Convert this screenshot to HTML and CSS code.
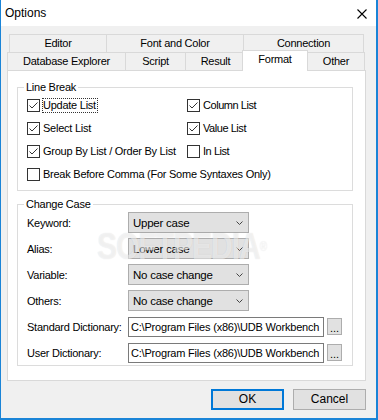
FILE: index.html
```html
<!DOCTYPE html>
<html>
<head>
<meta charset="utf-8">
<link rel="stylesheet" href="styles.css">
</head>
<body>
<div class="window">
  <div class="titlebar">
    <span class="title">Options</span>
    <svg class="close" width="10" height="10" viewBox="0 0 10 10"><path d="M0.5 0.5 L9.5 9.5 M9.5 0.5 L0.5 9.5" stroke="#000" stroke-width="1.1" fill="none"/></svg>
  </div>
  <div class="content">
    <div class="tabrow row1">
      <div class="tab t-editor">Editor</div>
      <div class="tab t-font">Font and Color</div>
      <div class="tab t-conn">Connection</div>
    </div>
    <div class="tabrow row2">
      <div class="tab t-db">Database Explorer</div>
      <div class="tab t-script">Script</div>
      <div class="tab t-result">Result</div>
      <div class="tab t-format">Format</div>
      <div class="tab t-other">Other</div>
    </div>
    <div class="panel">
      <div class="group group-lb">
        <div class="group-title">Line Break</div>
        <div class="checks">
          <div class="check"><svg class="box" width="13" height="13" viewBox="0 0 13 13"><rect x="0.5" y="0.5" width="12" height="12" fill="#fff" stroke="#333"/><polyline points="2.5,6.5 5,9 10.5,3.5" fill="none" stroke="#333" stroke-width="1"/></svg><span class="lbl focus">Update List</span></div>
          <div class="check right"><svg class="box" width="13" height="13" viewBox="0 0 13 13"><rect x="0.5" y="0.5" width="12" height="12" fill="#fff" stroke="#333"/><polyline points="2.5,6.5 5,9 10.5,3.5" fill="none" stroke="#333" stroke-width="1"/></svg><span class="lbl">Column List</span></div>
          <div class="check"><svg class="box" width="13" height="13" viewBox="0 0 13 13"><rect x="0.5" y="0.5" width="12" height="12" fill="#fff" stroke="#333"/><polyline points="2.5,6.5 5,9 10.5,3.5" fill="none" stroke="#333" stroke-width="1"/></svg><span class="lbl">Select List</span></div>
          <div class="check right"><svg class="box" width="13" height="13" viewBox="0 0 13 13"><rect x="0.5" y="0.5" width="12" height="12" fill="#fff" stroke="#333"/><polyline points="2.5,6.5 5,9 10.5,3.5" fill="none" stroke="#333" stroke-width="1"/></svg><span class="lbl">Value List</span></div>
          <div class="check"><svg class="box" width="13" height="13" viewBox="0 0 13 13"><rect x="0.5" y="0.5" width="12" height="12" fill="#fff" stroke="#333"/><polyline points="2.5,6.5 5,9 10.5,3.5" fill="none" stroke="#333" stroke-width="1"/></svg><span class="lbl">Group By List / Order By List</span></div>
          <div class="check right"><svg class="box" width="13" height="13" viewBox="0 0 13 13"><rect x="0.5" y="0.5" width="12" height="12" fill="#fff" stroke="#333"/></svg><span class="lbl">In List</span></div>
          <div class="check wide"><svg class="box" width="13" height="13" viewBox="0 0 13 13"><rect x="0.5" y="0.5" width="12" height="12" fill="#fff" stroke="#333"/></svg><span class="lbl">Break Before Comma (For Some Syntaxes Only)</span></div>
        </div>
      </div>
      <div class="group group-cc">
        <div class="group-title">Change Case</div>
        <div class="rows">
          <div class="row"><span class="rlabel">Keyword:</span><div class="combo"><span>Upper case</span><svg width="7" height="4" viewBox="0 0 7 4"><polyline points="0.5,0.5 3.5,3.5 6.5,0.5" fill="none" stroke="#444" stroke-width="1"/></svg></div></div>
          <div class="row"><span class="rlabel">Alias:</span><div class="combo"><span>Lower case</span><svg width="7" height="4" viewBox="0 0 7 4"><polyline points="0.5,0.5 3.5,3.5 6.5,0.5" fill="none" stroke="#444" stroke-width="1"/></svg></div></div>
          <div class="row"><span class="rlabel">Variable:</span><div class="combo"><span>No case change</span><svg width="7" height="4" viewBox="0 0 7 4"><polyline points="0.5,0.5 3.5,3.5 6.5,0.5" fill="none" stroke="#444" stroke-width="1"/></svg></div></div>
          <div class="row"><span class="rlabel">Others:</span><div class="combo"><span>No case change</span><svg width="7" height="4" viewBox="0 0 7 4"><polyline points="0.5,0.5 3.5,3.5 6.5,0.5" fill="none" stroke="#444" stroke-width="1"/></svg></div></div>
          <div class="row"><span class="rlabel">Standard Dictionary:</span><div class="field">C:\Program Files (x86)\UDB Workbench</div><div class="dots">...</div></div>
          <div class="row"><span class="rlabel">User Dictionary:</span><div class="field">C:\Program Files (x86)\UDB Workbench</div><div class="dots">...</div></div>
        </div>
      </div>
      <div class="watermark">SOFTPEDIA<sup>®</sup></div>
    </div>
    <div class="buttons">
      <div class="btn ok">OK</div>
      <div class="btn">Cancel</div>
    </div>
  </div>
</div>
</body>
</html>
```

FILE: styles.css
```css
* { box-sizing: border-box; }
html, body { margin: 0; padding: 0; }
body {
  font-family: "Liberation Sans", Arial, sans-serif;
  font-size: 11px;
  letter-spacing: -0.25px;
  color: #000;
  background: #f0f0f0;
}
.window {
  width: 378px;
  height: 420px;
  background: #f0f0f0;
  border-left: 1px solid #1a84d7;
  border-right: 2px solid #1a84d7;
  border-bottom: 2px solid #1a84d7;
  overflow: hidden;
}
.titlebar {
  height: 26px;
  background: #fff;
  display: flex;
  align-items: center;
  justify-content: space-between;
  padding-left: 4px;
  padding-right: 9px;
}
.title {
  font-size: 12px;
  letter-spacing: 0;
}
.close { margin-top: 2px; }
.content { padding-top: 8px; }
.tabrow {
  display: flex;
  height: 18px;
}
.row1 { margin-left: 8px; }
.row2 { margin-left: 6px; }
.tab {
  height: 18px;
  border-top: 1px solid #d9d9d9;
  border-left: 1px solid #d9d9d9;
  background: #f0f0f0;
  text-align: center;
  line-height: 17px;
}
.t-editor { width: 97px; }
.t-font { width: 137px; }
.t-conn { width: 121px; border-right: 1px solid #d9d9d9; }
.t-db { width: 118px; }
.t-script { width: 60px; }
.t-result { width: 60px; }
.t-format {
  width: 66px;
  height: 21px;
  margin-left: -3px;
  margin-top: -2px;
  border-right: 1px solid #d9d9d9;
  background: #fff;
  position: relative;
  z-index: 2;
  line-height: 17px;
}
.t-other { width: 57px; border-left: none; border-right: 1px solid #d9d9d9; }
.panel {
  position: relative;
  margin-left: 6px;
  width: 359px;
  height: 311px;
  border: 1px solid #d9d9d9;
  background: #fff;
  padding-top: 16px;
}
.group {
  margin-left: 9px;
  width: 336px;
  border: 1px solid #dcdcdc;
}
.group-title {
  width: max-content;
  margin-top: -8px;
  margin-left: 6px;
  padding: 0 2px;
  line-height: 14px;
  height: 14px;
  background: #fff;
}
.group-lb { padding-bottom: 4px; }
.checks {
  display: grid;
  grid-template-columns: 160px 1fr;
  grid-auto-rows: 23px;
  padding-left: 9px;
}
.check {
  display: flex;
  align-items: center;
}
.check.wide { grid-column: 1 / 3; }
.check.right .lbl { letter-spacing: -0.45px; }
.box { flex: none; margin-right: 3px; }
.lbl {
  line-height: 13px;
  border: 1px solid transparent;
  margin-left: -1px;
  padding: 0 1px 0 0;
}
.lbl.focus { border: 1px dotted #333; }
.group-cc {
  margin-top: 13px;
  padding-bottom: 2px;
}
.rows {
  display: flex;
  flex-direction: column;
  gap: 5px;
  margin-top: 1px;
  padding-left: 9px;
}
.row {
  display: flex;
  align-items: center;
  height: 21px;
}
.rlabel {
  width: 101px;
  flex: none;
}
.combo {
  width: 121px;
  height: 21px;
  background: #e1e1e1;
  border: 1px solid #adadad;
  display: flex;
  align-items: center;
  justify-content: space-between;
  padding: 0 5px 0 4px;
  font-size: 11.5px;
}
.field {
  width: 196px;
  height: 20px;
  border: 1px solid #7a7a7a;
  background: #fff;
  padding-left: 2px;
  line-height: 18px;
  white-space: nowrap;
  overflow: hidden;
  font-size: 11px;
  letter-spacing: -0.2px;
}
.dots {
  width: 15px;
  height: 17px;
  margin-left: 3px;
  background: #e1e1e1;
  border: 1px solid #adadad;
  text-align: center;
  line-height: 18px;
  letter-spacing: 0;
}
.watermark {
  position: absolute;
  left: 89px;
  top: 158px;
  font-size: 30px;
  font-weight: bold;
  letter-spacing: -1px;
  line-height: 30px;
  color: rgba(255, 255, 255, 0.55);
  text-shadow: 0 0 1px rgba(0, 0, 0, 0.12);
  transform: scaleY(1.2);
  transform-origin: top left;
  pointer-events: none;
}
.watermark sup { font-size: 10px; font-weight: normal; vertical-align: top; }
.buttons {
  display: flex;
  justify-content: flex-end;
  gap: 9px;
  margin-top: 8px;
  padding-right: 10px;
}
.btn {
  width: 73px;
  height: 21px;
  background: #e1e1e1;
  border: 1px solid #adadad;
  text-align: center;
  line-height: 19px;
  font-size: 12px;
  letter-spacing: 0;
}
.btn.ok {
  border: 2px solid #0078d7;
  line-height: 17px;
}
```
